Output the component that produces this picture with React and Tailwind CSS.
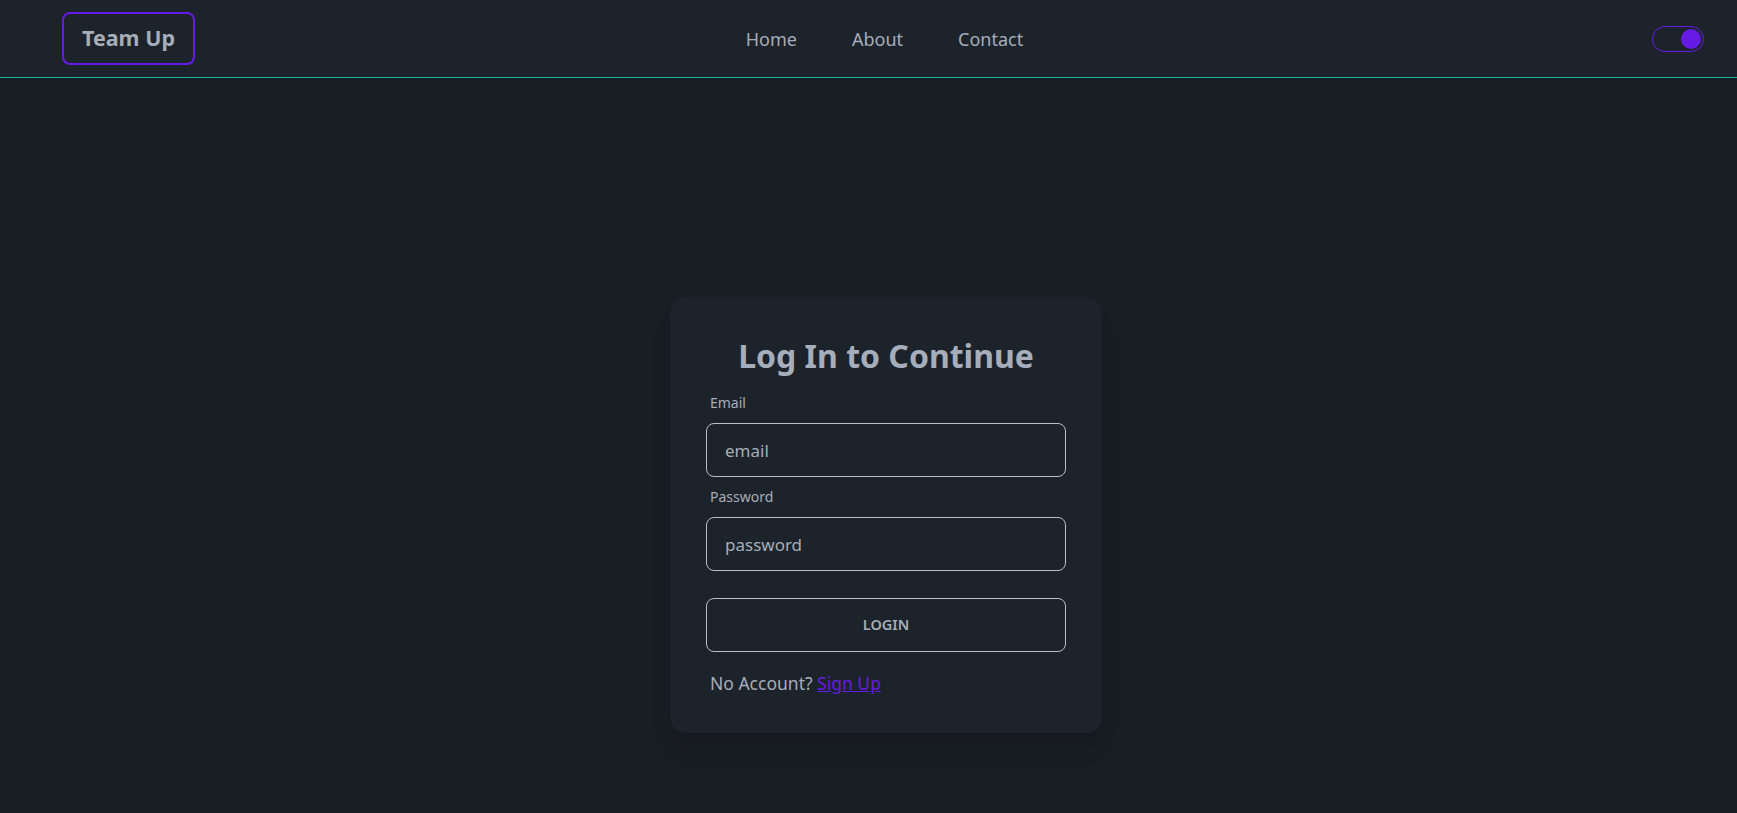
export default function App() {
  const font = { fontFamily: '"Noto Sans", "Open Sans", sans-serif' }

  return (
    <div className="min-h-screen bg-[#191e24] text-[#a6adbb]" style={font}>

      {/* Navbar */}
      <header className="h-[78px] flex items-center bg-[#1d232a] border-b border-[#1fb2a6] pl-[62px] pr-[27px]">
        <div className="flex-1 flex">
          <a className="h-[53px] px-[18px] flex items-center border-2 border-[#661ae6] rounded-lg text-[21.5px] font-bold">
            Team Up
          </a>
        </div>

        <nav className="flex items-center gap-[55px] text-[18px] pt-0.5 pl-[3px]">
          <a>Home</a>
          <a>About</a>
          <a>Contact</a>
        </nav>

        <div className="flex-1 flex justify-end pr-1.5">
          <div className="w-[52px] h-[26px] rounded-full border border-[#661ae6] flex items-center justify-end px-[2px]">
            <span className="w-5 h-5 rounded-full bg-[#661ae6]" />
          </div>
        </div>
      </header>

      {/* Login */}
      <main className="flex justify-center pl-[35px] pt-[219px] pb-20">
        <div className="w-[432px] bg-[#1d232a] rounded-2xl shadow-xl p-9">
          <h1 className="pt-[3px] text-[32px] leading-10 font-bold text-center mb-[9px]">
            Log In to Continue
          </h1>

          <label className="block px-1 py-2 text-[14px] leading-5">Email</label>
          <input
            placeholder="email"
            className="mt-0.5 w-full h-[54px] px-[18px] bg-[#1d232a] border border-[#b9bec8] rounded-lg text-[17px] placeholder-[#a6adbb] outline-none"
          />

          <label className="block px-1 py-2 mt-0.5 text-[14px] leading-5">Password</label>
          <input
            type="password"
            placeholder="password"
            className="mt-0.5 w-full h-[54px] px-[18px] bg-[#1d232a] border border-[#b9bec8] rounded-lg text-[17px] placeholder-[#a6adbb] outline-none"
          />

          <button className="mt-[27px] w-full h-[54px] border border-[#b9bec8] rounded-lg text-[14.5px] font-semibold">
            LOGIN
          </button>

          <p className="mt-[17px] px-1 text-[17.5px] leading-7">
            No Account? <a className="text-[#661ae6] underline">Sign Up</a>
          </p>
        </div>
      </main>
    </div>
  )
}
